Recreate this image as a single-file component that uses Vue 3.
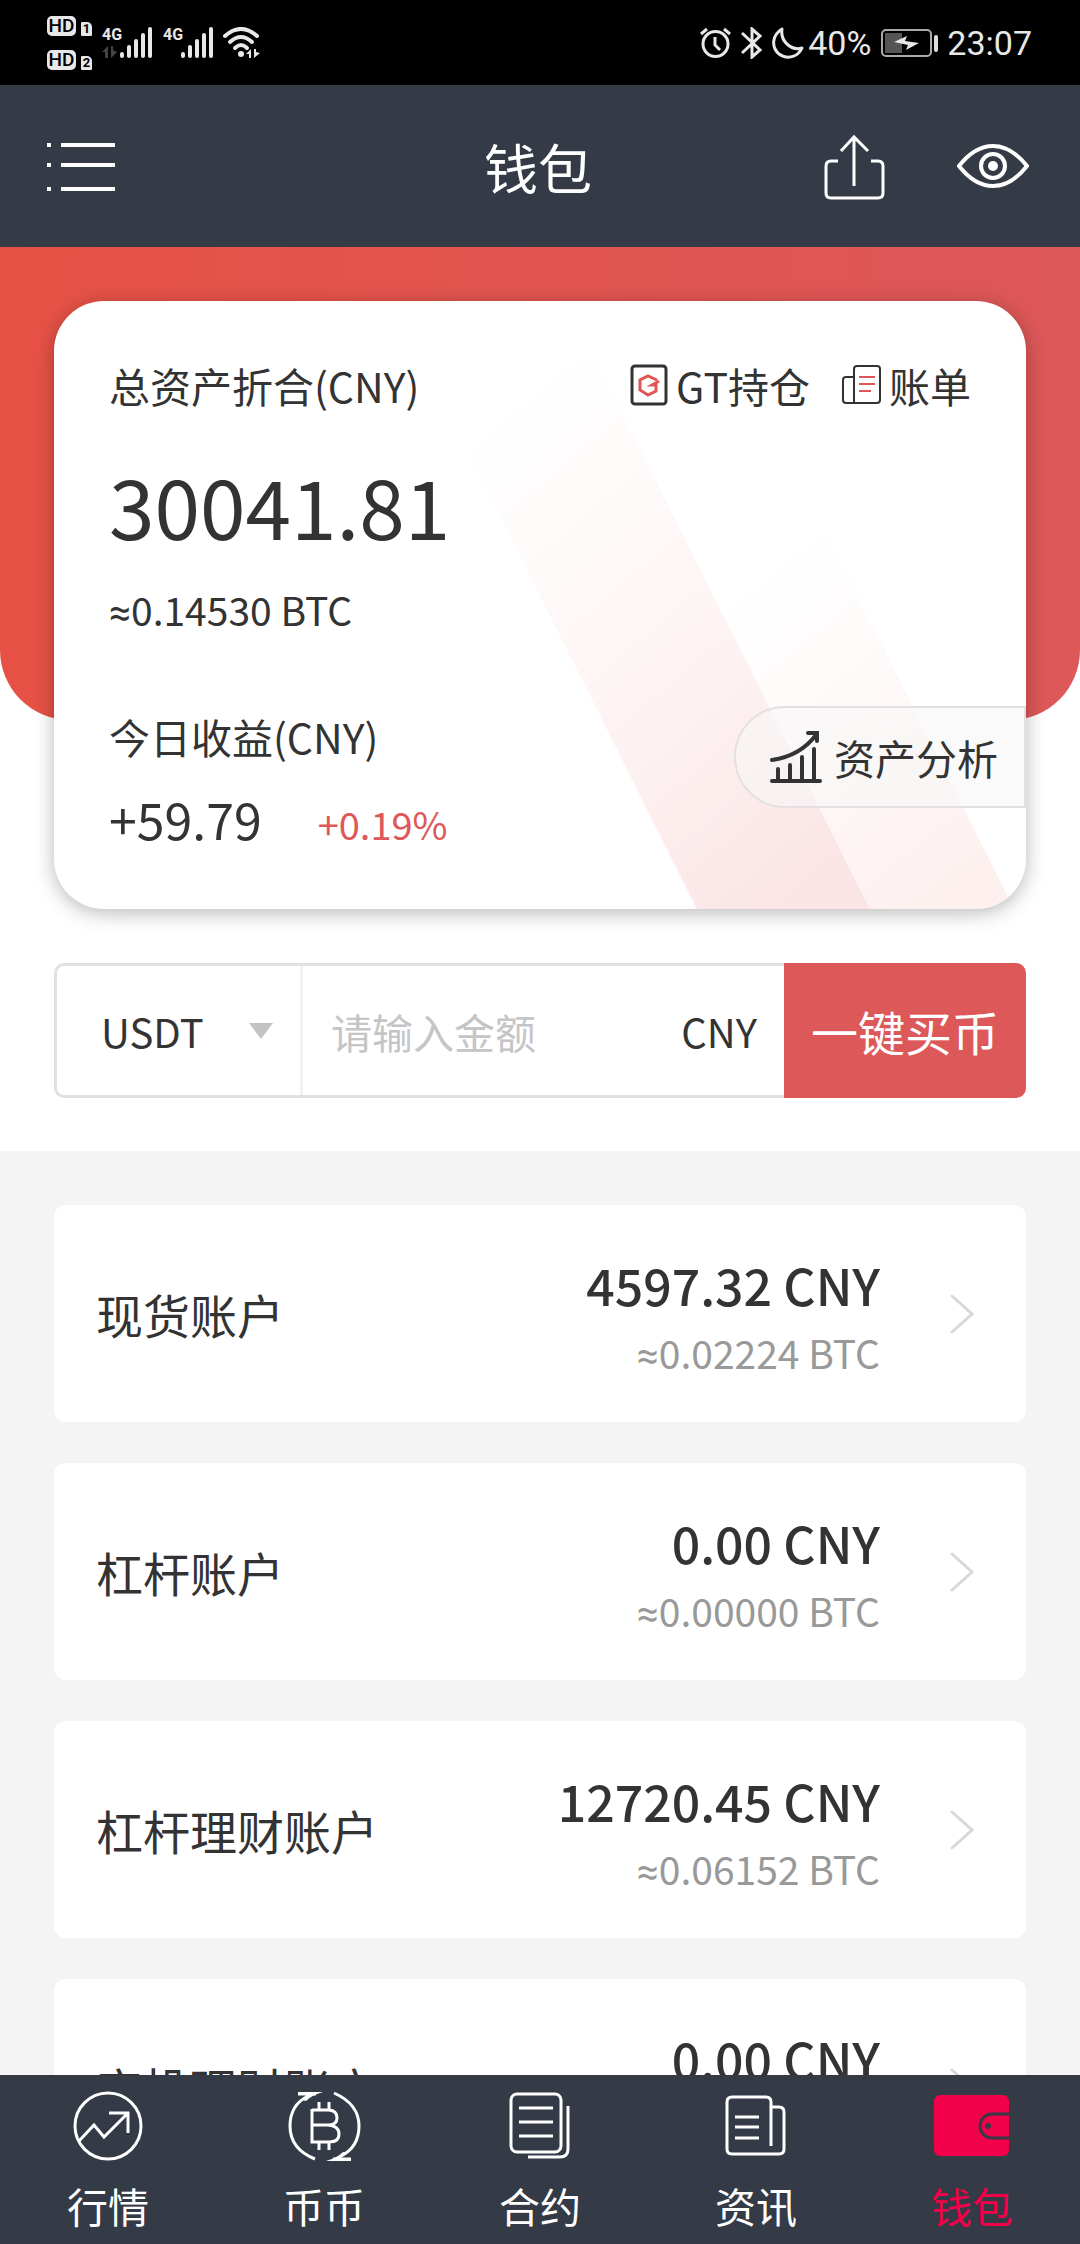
<script setup>
import { ref } from 'vue'

const coin = ref('USDT')
const amount = ref('')

const sims = [
  { id: 1, data: true },
  { id: 2, data: false }
]

const accounts = [
  { name: '现货账户', cny: '4597.32', btc: '0.02224' },
  { name: '杠杆账户', cny: '0.00', btc: '0.00000' },
  { name: '杠杆理财账户', cny: '12720.45', btc: '0.06152' },
  { name: '定投理财账户', cny: '0.00', btc: '0.00000' }
]

const tabs = [
  { key: 'market', label: '行情' },
  { key: 'coin', label: '币币' },
  { key: 'contract', label: '合约' },
  { key: 'news', label: '资讯' },
  { key: 'wallet', label: '钱包' }
]
const active = ref('wallet')
</script>

<template>
  <div class="app">
    <div class="status">
      <div class="status-side">
        <div class="hd-list">
          <div v-for="n in 2" :key="n" class="hd">
            <span class="hd-tag">HD</span>
            <span class="hd-sim">{{ n }}</span>
          </div>
        </div>
        <div v-for="sim in sims" :key="sim.id" class="signal">
          <div class="net">
            <span>4G</span>
            <svg v-if="sim.data" width="16" height="12" viewBox="0 0 16 12">
              <path d="M0 6L6 0V12H3V6ZM9 0V12L15 6L11 4V0Z" fill="#444" />
            </svg>
          </div>
          <svg width="32" height="31" viewBox="0 0 32 31">
            <path d="M2 27V29M9 20V29M16 14V29M23 8V29M30 2V29" stroke="#e8e8e8" stroke-width="4" stroke-linecap="round" />
          </svg>
        </div>
        <svg width="37" height="31" viewBox="0 0 37 31" fill="none" stroke="#e8e8e8" stroke-width="4" stroke-linecap="round">
          <path d="M2 9Q18 -5 34 9" />
          <path d="M7 15Q18 5 29 15" />
          <path d="M12 21Q18 15 24 21" />
          <circle cx="18" cy="27" r="3" fill="#e8e8e8" stroke="none" />
          <path d="M23 27L28 22V31H26V27ZM31 22V31L37 26L33 25V22Z" fill="#e8e8e8" stroke="none" />
        </svg>
      </div>
      <div class="status-side">
        <div class="status-icons">
          <svg width="31" height="32" viewBox="0 0 31 32" fill="none" stroke="#e8e8e8" stroke-width="3">
            <circle cx="15.5" cy="17" r="12.5" />
            <path d="M15 10V18L20 23M1 7L7 2M30 7L24 2" />
          </svg>
          <svg width="21" height="32" viewBox="0 0 21 32" fill="none" stroke="#e8e8e8" stroke-width="3">
            <path d="M1 6L19 23L11 30V2L19 9L1 26" />
          </svg>
          <svg width="32" height="32" viewBox="0 0 32 32" fill="none" stroke="#e8e8e8" stroke-width="3" stroke-linejoin="round">
            <path d="M10 2C0 8 -1 20 7 27C15 33 26 30 30 21C20 24 8 15 10 2Z" />
          </svg>
        </div>
        <span>40%</span>
        <svg class="battery" width="58" height="28" viewBox="0 0 58 28">
          <rect x="1" y="1" width="49" height="26" rx="4" fill="none" stroke="#aaa" stroke-width="2" />
          <rect x="4" y="4" width="17" height="20" fill="#555" />
          <path d="M13 13L27 16L25 21L38 14L24 12L26 7Z" fill="#e8e8e8" />
          <rect x="53" y="6" width="4" height="17" rx="2" fill="#ddd" />
        </svg>
        <span>23:07</span>
      </div>
    </div>

    <header class="header">
      <button class="icon-btn" aria-label="菜单">
        <svg width="68" height="48" viewBox="0 0 68 48" stroke="#fff" stroke-width="4">
          <path d="M0 2H4M14 2H68M0 22H4M14 22H68M0 46H4M14 46H68" />
        </svg>
      </button>
      <h1>钱包</h1>
      <div class="header-right">
        <button class="icon-btn" aria-label="分享">
          <svg width="61" height="66" viewBox="0 0 61 66" fill="none" stroke="#fff" stroke-width="3">
            <path d="M14 27H7Q2 27 2 32V59Q2 64 7 64H54Q59 64 59 59V32Q59 27 54 27H47" />
            <path d="M30 3V52M17 17L30 3L44 17" />
          </svg>
        </button>
        <button class="icon-btn" aria-label="显示资产">
          <svg width="72" height="46" viewBox="0 0 72 46" fill="none" stroke="#fff" stroke-width="4">
            <path d="M2 22C13 8 24 2 36 2S59 8 70 22C59 36 48 42 36 42S13 36 2 22Z" />
            <circle cx="36" cy="22" r="12" />
            <circle cx="36" cy="22" r="5" fill="#fff" stroke="none" />
          </svg>
        </button>
      </div>
    </header>

    <main class="content">
      <section class="top">
        <div class="red-back"></div>
        <div class="card">
          <svg class="beams" viewBox="0 0 972 608" preserveAspectRatio="xMaxYMax slice">
            <defs>
              <linearGradient id="beamA" x1="0.1" y1="0" x2="0.8" y2="1">
                <stop offset="0.1" stop-color="#fdf0ef" stop-opacity="0" />
                <stop offset="0.5" stop-color="#fdf0ef" stop-opacity="0.6" />
                <stop offset="1" stop-color="#fbe4e5" />
              </linearGradient>
              <linearGradient id="beamB" x1="0.1" y1="0" x2="0.8" y2="1">
                <stop offset="0.2" stop-color="#fdf2f1" stop-opacity="0" />
                <stop offset="1" stop-color="#fdf0ef" />
              </linearGradient>
            </defs>
            <path d="M368 60H542L816 608H643Z" fill="url(#beamA)" />
            <path d="M612 200H756L960 608H816Z" fill="url(#beamB)" />
          </svg>
          <div class="card-head">
            <span>总资产折合(CNY)</span>
            <div class="links">
              <a href="#">
                <svg width="38" height="42" viewBox="0 0 38 42" fill="none" stroke="#333" stroke-width="3">
                  <rect x="2" y="2" width="34" height="38" rx="3" />
                  <path d="M27 16L18 12L10 16V26L18 31L26 27V21H22L29 17" stroke="#e05555" />
                </svg>
                <span>GT持仓</span>
              </a>
              <a href="#">
                <svg width="39" height="40" viewBox="0 0 39 40" fill="none" stroke="#333" stroke-width="2">
                  <path d="M12 38V4Q12 1 15 1H35Q38 1 38 4V35Q38 38 35 38H4Q1 38 1 35V15Q1 12 4 12H12" />
                  <path d="M17 12H33M17 19H33M17 26H29" stroke="#e05555" />
                </svg>
                <span>账单</span>
              </a>
            </div>
          </div>
          <div class="total">30041.81</div>
          <div class="total-btc"><span class="approx">≈</span>0.14530 BTC</div>
          <div class="profit">
            <div>
              <div class="profit-label">今日收益(CNY)</div>
              <div class="profit-row">
                <span class="profit-value">+59.79</span>
                <span class="profit-rate">+0.19%</span>
              </div>
            </div>
            <button class="analysis">
              <svg width="52" height="52" viewBox="0 0 52 52" fill="none" stroke="#333" stroke-width="4" stroke-linecap="round">
                <path d="M2 29Q30 25 46 4M38 2H47V10M2 50H50" />
                <path d="M8 38V49M20 34V49M32 26V49M44 18V49" />
              </svg>
              <span>资产分析</span>
            </button>
          </div>
        </div>

        <form class="buy" @submit.prevent>
          <div class="coin">
            <select v-model="coin" aria-label="币种">
              <option>USDT</option>
            </select>
            <i class="arrow"></i>
          </div>
          <label class="amount">
            <input v-model="amount" type="text" placeholder="请输入金额" />
            <span>CNY</span>
          </label>
          <button class="buy-btn">一键买币</button>
        </form>
      </section>

      <section class="accounts">
        <a v-for="acc in accounts" :key="acc.name" href="#" class="account">
          <span class="account-name">{{ acc.name }}</span>
          <div class="account-sum">
            <div class="cny">{{ acc.cny }} CNY</div>
            <div class="btc"><span class="approx">≈</span>{{ acc.btc }} BTC</div>
          </div>
          <svg width="24" height="40" viewBox="0 0 24 40" fill="none" stroke="#d8d8d8" stroke-width="3" stroke-linecap="round">
            <path d="M2 2L22 20L2 38" />
          </svg>
        </a>
      </section>
    </main>

    <nav class="tabs">
      <button v-for="tab in tabs" :key="tab.key" :class="['tab', { on: active === tab.key }]" @click="active = tab.key">
        <svg width="76" height="72" viewBox="-2 0 76 72" fill="none" stroke="#fff" stroke-width="3">
          <template v-if="tab.key === 'market'">
            <circle cx="36" cy="36" r="33" />
            <path d="M7 51L22 35L32 47L56 23M37 23H56V43" />
          </template>
          <template v-else-if="tab.key === 'coin'">
            <path d="M10 4H28M20 6Q2 15 2 36Q2 59 27 69" />
            <path d="M10 2H35Q24 5 18 11L14 10L20 5H10Z" fill="#fff" stroke="none" />
            <path d="M46 3Q71 14 71 36Q71 57 53 66M45 69H63" />
            <path d="M63 71H38Q49 68 55 62L59 63L53 68H63Z" fill="#fff" stroke="none" />
            <path d="M24 20H40Q49 20 49 28Q49 35 40 35H24M40 35Q51 36 51 44Q51 52 41 52H24V19M31 12V20M41 12V20M31 52V60M41 52V60" />
          </template>
          <template v-else-if="tab.key === 'contract'">
            <rect x="7" y="4" width="50" height="58" rx="6" />
            <path d="M15 18H49M15 32H49M15 46H49" />
            <path d="M64 16V59Q64 67 56 67H24" />
          </template>
          <template v-else-if="tab.key === 'news'">
            <path d="M51 56V12Q51 7 46 7H12Q7 7 7 12V59Q7 64 12 64H59Q64 64 64 59V22Q64 17 59 17H51" />
            <path d="M15 27H39M15 37H39M15 48H39" />
          </template>
          <template v-else>
            <rect x="-2" y="5" width="75" height="61" rx="6" fill="#f20049" stroke="none" />
            <path d="M74 24H56A12 12 0 0 0 56 48H74" stroke="#343a46" />
            <circle cx="52" cy="36" r="3" fill="#343a46" stroke="none" />
          </template>
        </svg>
        <span>{{ tab.label }}</span>
      </button>
    </nav>
  </div>
</template>

<style>
body {
  margin: 0;
}
</style>

<style scoped>
.app {
  height: 100vh;
  display: flex;
  flex-direction: column;
  background: #fff;
  color: #333;
  font-family: "Noto Sans CJK SC", "Noto Sans", sans-serif;
  font-size: 41px;
}

.app * {
  box-sizing: border-box;
}

a {
  color: inherit;
  text-decoration: none;
}

button {
  border: 0;
  padding: 0;
  background: none;
  color: inherit;
  font: inherit;
}

svg {
  display: block;
  flex: none;
}

.status {
  height: 85px;
  flex: none;
  display: flex;
  justify-content: space-between;
  align-items: center;
  padding: 0 48px 0 47px;
  background: #000;
  color: #e8e8e8;
  font-family: Roboto, sans-serif;
  font-size: 34px;
}

.status-side {
  display: flex;
  align-items: center;
}

.status-icons {
  display: flex;
  gap: 10px;
  margin-right: 4px;
}

.battery {
  margin: 0 8px 0 10px;
}

.hd-list {
  display: flex;
  flex-direction: column;
  gap: 14px;
}

.hd {
  display: flex;
  align-items: flex-end;
  gap: 5px;
}

.hd-tag {
  width: 29px;
  border-radius: 5px;
  background: #e8e8e8;
  color: #000;
  font-size: 19px;
  font-weight: 500;
  line-height: 20px;
  text-align: center;
}

.hd-sim {
  width: 11px;
  border-radius: 1px 5px 1px 1px;
  background: #e8e8e8;
  color: #000;
  font-size: 13px;
  font-weight: 700;
  line-height: 14px;
  text-align: center;
}

.signal {
  display: flex;
  align-items: flex-end;
  margin-left: 10px;
}

.signal + .signal {
  margin-left: 11px;
}

.signal + svg {
  margin-left: 10px;
}

.net {
  width: 18px;
  height: 31px;
  display: flex;
  flex-direction: column;
  justify-content: space-between;
  font-size: 16px;
  font-weight: 700;
  line-height: 16px;
}

.header {
  height: 162px;
  flex: none;
  display: grid;
  grid-template-columns: 1fr auto 1fr;
  align-items: center;
  padding: 2px 51px 0 47px;
  background: #343a46;
  color: #fff;
}

.header h1 {
  margin: 0;
  font-size: 54px;
  font-weight: 400;
  line-height: 72px;
}

.header-right {
  display: flex;
  justify-content: flex-end;
  align-items: center;
  gap: 72px;
}

.content {
  flex: 1;
  min-height: 0;
  overflow: hidden;
}

.top {
  position: relative;
  padding: 54px 54px 53px;
}

.red-back {
  position: absolute;
  top: 0;
  left: 0;
  right: 0;
  height: 473px;
  border-radius: 0 0 70px 70px;
  background: linear-gradient(90deg, #e75145, #dd5859);
}

.card {
  position: relative;
  overflow: hidden;
  padding: 54px 0 53px 55px;
  border-radius: 50px;
  background: #fff;
  box-shadow: 0 4px 20px rgba(0, 0, 0, 0.28);
}

.beams {
  position: absolute;
  top: 0;
  left: 0;
  width: 100%;
  height: 100%;
}

.card > div {
  position: relative;
}

.card-head {
  display: flex;
  justify-content: space-between;
  padding-right: 55px;
  line-height: 60px;
}

.links {
  display: flex;
  gap: 32px;
}

.links a {
  display: flex;
  align-items: center;
  gap: 8px;
}

.total {
  margin-top: 42px;
  font-size: 82px;
  line-height: 96px;
}

.total-btc {
  margin-top: 28px;
  font-size: 39px;
  line-height: 56px;
}

.approx {
  font-family: Roboto, sans-serif;
  line-height: 1;
}

.profit {
  display: flex;
  justify-content: space-between;
  align-items: flex-start;
  margin-top: 69px;
}

.profit-label {
  line-height: 60px;
}

.profit-row {
  display: flex;
  align-items: baseline;
  gap: 56px;
  margin-top: 20px;
  line-height: 64px;
}

.profit-value {
  font-size: 50px;
}

.profit-rate {
  color: #dd5859;
  font-size: 38px;
}

.analysis {
  height: 102px;
  display: flex;
  align-items: center;
  gap: 12px;
  padding: 0 26px 0 34px;
  border: 2px solid #e2e0e0;
  border-radius: 51px 0 0 51px;
  background: rgba(246, 246, 246, 0.6);
}

.buy {
  height: 135px;
  display: flex;
  margin-top: 54px;
  border: 3px solid #e1e1e1;
  border-right: 0;
  border-radius: 10px;
  font-size: 40px;
}

.coin {
  flex: 0 0 246px;
  display: flex;
  align-items: center;
  justify-content: space-between;
  padding: 0 27px 0 44px;
  border-right: 3px solid #f2f2f2;
}

.coin select {
  width: 120px;
  padding: 0;
  border: 0;
  appearance: none;
  background: none;
  color: inherit;
  font: inherit;
}

.arrow {
  border: 12px solid transparent;
  border-top: 16px solid #c3c3c3;
  border-bottom: 0;
}

.amount {
  flex: 1;
  min-width: 0;
  display: flex;
  align-items: center;
  padding: 0 27px 0 28px;
}

.amount input {
  flex: 1;
  min-width: 0;
  padding: 0;
  border: 0;
  outline: none;
  background: none;
  color: inherit;
  font: inherit;
  font-size: 41px;
}

.amount input::placeholder {
  color: #c5c5c7;
}

.buy-btn {
  flex: 0 0 242px;
  margin: -3px 0;
  border-radius: 0 10px 10px 0;
  background: #dd5859;
  color: #fff;
  font-size: 47px;
}

.accounts {
  display: flex;
  flex-direction: column;
  gap: 41px;
  padding: 54px;
  background: #f4f4f4;
}

.account {
  height: 217px;
  display: flex;
  align-items: center;
  padding: 0 52px 0 42px;
  border-radius: 12px;
  background: #fff;
}

.account-name {
  flex: 1;
  font-size: 47px;
}

.account-sum {
  margin-right: 70px;
  text-align: right;
}

.cny {
  font-size: 50px;
  font-weight: 500;
  line-height: 76px;
}

.btc {
  color: #999;
  font-size: 39px;
  line-height: 60px;
}

.tabs {
  flex: none;
  display: flex;
  background: #343a46;
  color: #fff;
}

.tab {
  flex: 1;
  display: flex;
  flex-direction: column;
  align-items: center;
  gap: 15px;
  padding: 15px 0 11px;
  line-height: 56px;
}

.tab.on {
  color: #f20049;
}
</style>
